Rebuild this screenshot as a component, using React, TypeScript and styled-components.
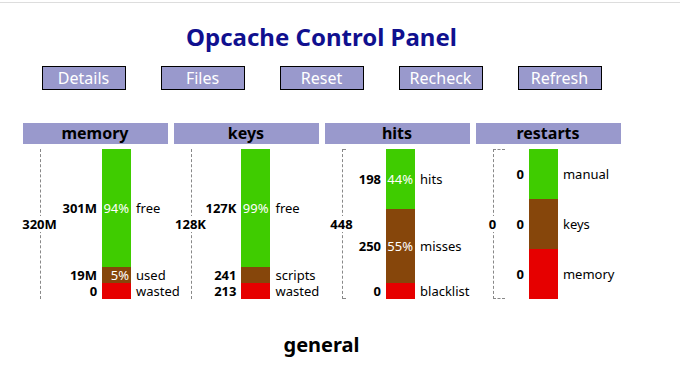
import React from "react";
import styled, { createGlobalStyle } from "styled-components";

const GlobalStyle = createGlobalStyle`
  body {
    margin: 0;
    background: #fff;
    font-family: "Noto Sans", "Open Sans", sans-serif;
    color: #000;
  }
`;

type Seg = { value: string; pct?: string; label: string; color: string; h: number };
type Graph = { title: string; total: string; indent: number; segs: Seg[] };

const GREEN = "#3fcc00";
const BROWN = "#86460b";
const RED = "#e60000";

const graphs: Graph[] = [
  {
    title: "memory",
    total: "320M",
    indent: 22,
    segs: [
      { value: "301M", pct: "94%", label: "free", color: GREEN, h: 118 },
      { value: "19M", pct: "5%", label: "used", color: BROWN, h: 16 },
      { value: "0", label: "wasted", color: RED, h: 16 },
    ],
  },
  {
    title: "keys",
    total: "128K",
    indent: 14,
    segs: [
      { value: "127K", pct: "99%", label: "free", color: GREEN, h: 118 },
      { value: "241", label: "scripts", color: BROWN, h: 16 },
      { value: "213", label: "wasted", color: RED, h: 16 },
    ],
  },
  {
    title: "hits",
    total: "448",
    indent: 13,
    segs: [
      { value: "198", pct: "44%", label: "hits", color: GREEN, h: 60 },
      { value: "250", pct: "55%", label: "misses", color: BROWN, h: 74 },
      { value: "0", label: "blacklist", color: RED, h: 16 },
    ],
  },
  {
    title: "restarts",
    total: "0",
    indent: 12,
    segs: [
      { value: "0", label: "manual", color: GREEN, h: 50 },
      { value: "0", label: "keys", color: BROWN, h: 50 },
      { value: "0", label: "memory", color: RED, h: 50 },
    ],
  },
];

const buttons = ["Details", "Files", "Reset", "Recheck", "Refresh"];

const App: React.FC = () => {
  return (
    <>
      <GlobalStyle />
      <Rule />
      <Page>
        <Title>Opcache Control Panel</Title>
        <Toolbar>
          {buttons.map((b) => (
            <Button key={b}>{b}</Button>
          ))}
        </Toolbar>
        <Columns>
          {graphs.map((g) => (
            <Column key={g.title}>
              <Header>{g.title}</Header>
              <GraphRow>
                <Bracket>
                  <Total>{g.total}</Total>
                </Bracket>
                <Chart $indent={g.indent} $rows={g.segs.map((s) => `${s.h}px`).join(" ")}>
                  {g.segs.map((s) => (
                    <React.Fragment key={s.label}>
                      <Num>{s.value}</Num>
                      <Bar $color={s.color}>{s.pct}</Bar>
                      <Label>{s.label}</Label>
                    </React.Fragment>
                  ))}
                </Chart>
              </GraphRow>
            </Column>
          ))}
        </Columns>
        <Section>general</Section>
      </Page>
    </>
  );
};

export default App;

const Rule = styled.div`
  margin-top: 2px;
  border-top: 1px solid #dddddd;
`;

const Page = styled.div`
  width: 643px;
  padding-top: 17px;
  display: flex;
  flex-direction: column;
  align-items: center;
`;

const Title = styled.h1`
  margin: 0;
  font-size: 24px;
  line-height: 34px;
  font-weight: 700;
  color: #10108f;
`;

const Toolbar = styled.div`
  display: flex;
  gap: 35px;
  margin-top: 12px;
`;

const Button = styled.button`
  width: 84px;
  height: 24px;
  padding: 0;
  border: 1px solid #000;
  background: #9999cc;
  color: #fff;
  font-family: inherit;
  font-size: 16px;
  line-height: 20px;
`;

const Columns = styled.div`
  display: flex;
  gap: 6px;
  margin-top: 33px;
`;

const Column = styled.div`
  width: 145px;
  display: flex;
  flex-direction: column;
`;

const Header = styled.div`
  height: 21px;
  background: #9999cc;
  text-align: center;
  font-size: 16px;
  line-height: 21px;
  font-weight: 700;
`;

const GraphRow = styled.div`
  display: flex;
  margin-top: 5px;
  height: 150px;
  white-space: nowrap;
`;

const Bracket = styled.div`
  position: relative;
  box-sizing: border-box;
  width: 12px;
  height: 150px;
  margin-left: 17px;
  border: 1px dashed #888;
  border-right: none;
`;

const Total = styled.span`
  position: absolute;
  left: -1px;
  top: 50%;
  transform: translate(-50%, -50%);
  background: #fff;
  font-size: 13px;
  font-weight: 700;
  line-height: 16px;
`;

const Chart = styled.div<{ $rows: string; $indent: number }>`
  display: grid;
  grid-template-columns: auto 29px auto;
  grid-template-rows: ${(p) => p.$rows};
  margin-left: ${(p) => p.$indent}px;
  font-size: 13px;
  line-height: 14px;
`;

const Num = styled.div`
  display: flex;
  align-items: center;
  justify-content: flex-end;
  padding-right: 5px;
  font-weight: 700;
`;

const Bar = styled.div<{ $color: string }>`
  display: flex;
  align-items: center;
  justify-content: flex-end;
  padding-right: 2px;
  background: ${(p) => p.$color};
  color: #fff;
`;

const Label = styled.div`
  display: flex;
  align-items: center;
  padding-left: 5px;
`;

const Section = styled.h2`
  margin: 32px 0 0;
  font-size: 20px;
  line-height: 28px;
  font-weight: 700;
`;
